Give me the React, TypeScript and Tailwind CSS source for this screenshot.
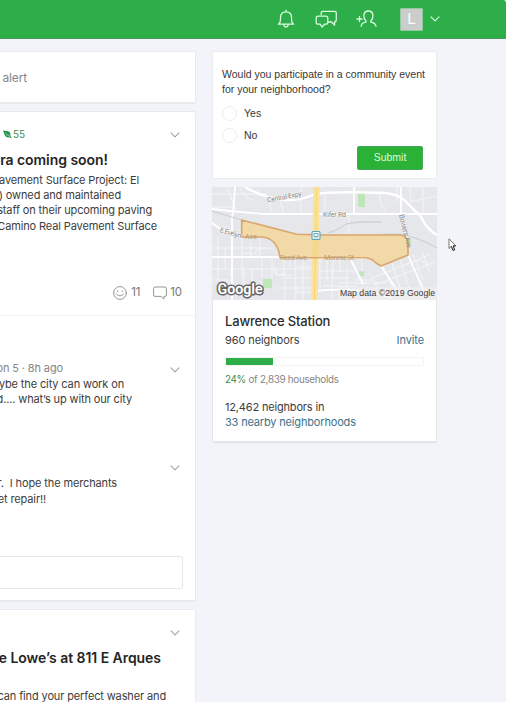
import React from "react";

type LineProps = { className: string; children: React.ReactNode };

/** One line of a post whose beginning runs off the left edge of the window. */
function Line({ className, children }: LineProps) {
  return (
    <div className={`flex justify-end overflow-hidden whitespace-pre ${className}`}>
      <span className="shrink-0">{children}</span>
    </div>
  );
}

function Chevron({ className }: { className: string }) {
  return (
    <svg className={className} width="10" height="6" viewBox="0 0 10 6" fill="none" stroke="currentColor" strokeWidth="1.1" strokeLinecap="round" strokeLinejoin="round">
      <path d="M1 0.8 L5 4.8 L9 0.8" />
    </svg>
  );
}

function Header() {
  return (
    <header className="flex h-[39px] shrink-0 items-center rounded-tr-[3px] border-b border-[#4a9a5e] bg-[#2dae49] pl-[277px] text-[#d9fbe0]">
      <svg width="18" height="20" viewBox="0 0 18 20" fill="none" stroke="currentColor" strokeWidth="1.3" strokeLinejoin="round" strokeLinecap="round">
        <path d="M1.3 15.2 C2.8 14.2 3.5 12.8 3.5 10.5 V8.2 C3.5 5 5.7 2.8 9 2.8 C12.3 2.8 14.5 5 14.5 8.2 V10.5 C14.5 12.8 15.2 14.2 16.7 15.2 Z M9 2.7 V1.2 M6.8 15.5 C7 18.8 11 18.8 11.2 15.5" />
      </svg>
      <svg className="ml-5" width="23" height="20" viewBox="0 0 23 20" fill="none" stroke="currentColor" strokeWidth="1.3" strokeLinejoin="round">
        <path d="M6.2 6 V4 Q6.2 2.4 7.8 2.4 H19.6 Q21.3 2.4 21.3 4.1 V10.7 Q21.3 12.6 19.6 13 V16 L16.5 13 H12.8" />
        <path d="M3.2 7.2 H10.8 Q12.8 7.2 12.8 9.2 V13.2 Q12.8 15.2 10.8 15.2 H9.6 L7 18 L5.2 15.2 H3.2 Q1.2 15.2 1.2 13.2 V9.2 Q1.2 7.2 3.2 7.2 Z" />
      </svg>
      <svg className="ml-[17px]" width="23" height="20" viewBox="0 0 23 20" fill="none" stroke="currentColor" strokeWidth="1.3" strokeLinejoin="round" strokeLinecap="round">
        <path d="M2 10 H7 M4.5 7.5 V12.5" />
        <path d="M6.2 17.2 C6.4 14.2 8 13.8 10.9 13 Q11.5 12.6 10.7 11.7 C9.2 10.2 8.8 8.3 8.9 6.5 C9 3.7 10.7 2 13.4 2 C16.1 2 17.8 3.7 17.9 6.5 C18 8.3 17.6 10.2 16.1 11.7 Q15.3 12.6 15.9 13 C18.8 13.8 20.8 14.2 21 17.2" />
      </svg>
      <div className="ml-[22px] flex h-[23px] w-[23px] items-center justify-center rounded-[1px] border border-[#92c99d] bg-[#cacdcb] text-[15px] text-white">L</div>
      <Chevron className="ml-[7px]" />
    </header>
  );
}

function NeighborhoodMap() {
  return (
    <svg width="225" height="113" viewBox="0 0 225 113" className="-ml-px block bg-[#e6e7ea]" fontFamily="Roboto, sans-serif">
      <g fill="#bfe6b8">
        <rect x="51" y="92" width="9" height="9" />
        <rect x="146" y="6" width="7" height="14" />
        <rect x="147" y="84" width="5" height="5" />
        <rect x="194" y="52" width="5" height="5" />
      </g>
      <g fill="none" stroke="#f5f6f7" strokeWidth="0.9">
        <path d="M0 61H61M0 82H99M6 50V92M13 62V82M30 50V91M39 56V71M48 52V71M0 93H18M19 82V90M32 80V98M50 71V91M60 72V91M72 71V90M83 71V112M91 71V113M70 91H99M64 101H99M73 93V113M40 99V82H48" />
        <path d="M42 67Q48 58 56 62M30 66H39V71M61 82Q65 91 74 86M84 80H100M64 83V88H80M78 71V82M84 97V105H99M103 84H142M108 71V104M115 71V94M121 71V91M128 71V85M135 80V105M105 91H137M111 99H145M150 71V85M143 93H160" />
        <path d="M160 91L217 68M163 98L223 75M171 79L180 100M180 76L189 103M188 73L197 101M201 67L211 93M210 65L218 86M157 85L165 101M169 5Q165 14 174 24M185 0V15M198 0L199 15M211 0V27M225 9L197 15M120 80V113M126 96H175M199 77Q209 69 220 80" />
        <path d="M0 7H54L60 24M15 0L24 24M28 0Q30 10 41 13M0 20H22M67 10L72 27M89 0V27M137 27V47M113 8V27" />
      </g>
      <g fill="none" stroke="#fff" strokeWidth="2.4" strokeLinejoin="round">
        <path d="M33 0Q52 11 73 13Q88 14 103 7Q120 4 174 6C194 8 197 21 208 28Q215 43 225 48" />
        <path d="M0 22Q25 25 52 27H225M23 0Q22 18 20 33V113M0 70H68M0 36Q14 47 30 49.5M142 0V27M189 0V25Q192 43 196 53M196 68L216 113M138 71L151 97M104 71H156M169 79L188 108M104 104Q146 99 180 111" strokeWidth="1.8" />
      </g>
      <path d="M0 24L30 33M116 46Q126 43 134 37Q149 34 169 35M169 48Q193 43 225 61" fill="none" stroke="#cfd2d1" strokeWidth="1.3" />
      <path d="M104.5 0L102.5 113" stroke="#fbe39c" strokeWidth="6.5" />
      <path d="M104.5 0L102.5 113" stroke="#f7d77c" strokeWidth="1.2" />
      <path d="M29.7 33L84.7 47.3L113 48H189Q194 49 196 54V68L169 79L164 76Q160 71 153 70.7H68L67 65Q63 51 50 50H29.7Z" fill="#f6d38b" fillOpacity="0.7" stroke="#dba56b" strokeWidth="1.6" strokeLinejoin="round" />
      <g fontSize="7" fill="#858789" stroke="#f4f4f4" strokeWidth="1.2" paintOrder="stroke">
        <text transform="translate(55.5 15.5) rotate(-11)" textLength="35">Central Expy</text>
        <text x="111" y="30" textLength="23">Kifer Rd</text>
        <text transform="translate(7.5 45) rotate(16)" textLength="22">E Evelyn</text>
      </g>
      <g fontSize="7" fill="#b79b72">
        <text x="33" y="52" textLength="12">Ave</text>
        <text x="68" y="73" textLength="27">Reed Ave</text>
        <text x="112" y="73" textLength="30">Monroe St</text>
        <text transform="translate(187 28) rotate(76)" textLength="34" fill="#858789">Bowers Ave</text>
      </g>
      <g>
        <rect x="100" y="44.5" width="8" height="8" rx="1" fill="#eef6f8" stroke="#5fa3b8" strokeWidth="1.1" />
        <rect x="102" y="46.5" width="4" height="3" fill="none" stroke="#5fa3b8" strokeWidth="0.8" />
        <path d="M102.5 51.5L103.5 50M105.5 51.5L104.5 50" stroke="#5fa3b8" strokeWidth="0.7" />
      </g>
      <text x="5.5" y="107" fontSize="14" fontWeight="600" textLength="45" lengthAdjust="spacingAndGlyphs" fill="#fff" stroke="#656565" strokeWidth="3" strokeLinejoin="round" paintOrder="stroke">Google</text>
      <rect x="126" y="100" width="99" height="13" fill="#f2f2f3" fillOpacity="0.6" />
      <text x="128" y="109" fontSize="9" fontFamily="Liberation Sans, Arial, sans-serif" textLength="95" lengthAdjust="spacingAndGlyphs" fill="#3b3b3b">Map data ©2019 Google</text>
    </svg>
  );
}

function Poll() {
  return (
    <section className="flex h-[128px] flex-col rounded-[2px] border border-[#ebecef] bg-white px-[9px] pt-[15px] font-['Liberation_Sans',Arial,sans-serif] text-[10.5px] text-[#383838]">
      <p className="whitespace-nowrap leading-[15px]">Would you participate in a community event<br />for your neighborhood?</p>
      <div className="mt-[9px] flex h-[15px] items-center gap-[7px]">
        <span className="h-[15px] w-[15px] rounded-full border border-[#ececee]" />Yes
      </div>
      <div className="mt-[7px] flex h-[15px] items-center gap-[7px]">
        <span className="h-[15px] w-[15px] rounded-full border border-[#ececee]" />No
      </div>
      <button className="mr-[4px] mt-[3px] h-[24px] w-[66px] shrink-0 self-end rounded-[2px] border border-[#43a957] bg-[#2bb135] text-[10.5px] text-[#dbfbdc]">Submit</button>
    </section>
  );
}

function NeighborhoodCard() {
  return (
    <section className="mt-2 h-[255px] rounded-b-[2px] border-x border-b border-[#e5e6ea] bg-white shadow-[0_1px_1px_#e0e1e5]">
      <NeighborhoodMap />
      <div className="px-3 text-[11px] leading-[15px] tracking-[-0.17px] text-[#3d3d3d]">
        <h2 className="mt-[13px] text-[13px] font-medium leading-4 text-[#2d2d2d]">Lawrence Station</h2>
        <div className="mt-[4px] flex justify-between tracking-[-0.1px]">
          <span>960 neighbors</span><span className="text-[#3d7289]">Invite</span>
        </div>
        <div className="mt-[9px] h-[9px] border border-[#f4f4f4]">
          <div className="h-[7px] w-[47px] bg-[#2dae49]" />
        </div>
        <p className="mt-[6px] text-[9.8px] tracking-[-0.27px] text-[#858585]"><span className="text-[#3f8a4f]">24%</span> of 2,839 households</p>
        <p className="mt-[13px]">12,462 neighbors in</p>
        <p className="text-[#3d7289]">33 nearby neighborhoods</p>
      </div>
    </section>
  );
}

function Feed() {
  return (
    <div className="flex w-[196px] shrink-0 flex-col overflow-hidden pt-[12px] text-[11px] leading-[15.2px] tracking-[-0.13px] text-[#3c3c3c]">
      <section className="h-[53px] shrink-0 rounded-r-[2px] border border-l-0 border-b-2 border-[#e8e9ed] bg-white pt-[18px] text-xs text-[#858585]">
        <Line className="w-[27px]">alert</Line>
      </section>

      <section className="mt-[7px] h-[491px] shrink-0 rounded-r-[2px] border border-b-2 border-l-0 border-[#e8e9ed] bg-white">
        <div className="mt-[15px] flex h-[15px] items-center pl-[3px] pr-[15px] text-[10px] text-[#3f8a4f]">
          <svg width="9" height="9" viewBox="0 0 9 9"><path d="M0 0.5 L6 1.5 Q8 3 7.5 6 L8.8 8.5 L7 7.5 Q2 8 1 3 Z" fill="#229044" /><path d="M2 2.5L7 7M3 5L7 5" stroke="#a8deb4" strokeWidth="0.6" /></svg>
          <span className="ml-[1px]">55</span>
          <Chevron className="ml-auto text-[#a4a4a4]" />
        </div>
        <Line className="mt-[9px] w-[108px] text-[14px] font-semibold leading-[18px] tracking-[-0.05px] text-[#252525]">Camino Real near Sierra coming soon!</Line>
        <div className="mt-[4px]">
          <Line className="w-[139px]">Pavement Surface Project: El</Line>
          <Line className="w-[121px]">(Caltrans) owned and maintained</Line>
          <Line className="w-[152px]">staff on their upcoming paving</Line>
          <Line className="w-[157px]">Camino Real Pavement Surface</Line>
        </div>
        <div className="mt-[51px] flex h-[16px] items-center justify-end pr-[13px] text-[11.5px] text-[#777]">
          <svg width="14" height="14" viewBox="0 0 14 14" fill="none" stroke="#8a8a8a" strokeWidth="0.9" strokeLinecap="round"><circle cx="7" cy="7" r="6.4" /><path d="M4.7 5V5.4M9.3 5V5.4" strokeWidth="1.2" /><path d="M3.5 8Q7 12 10.5 8" /></svg>
          <span className="ml-[4px]">11</span>
          <svg className="ml-[13px]" width="14" height="14" viewBox="0 0 14 14" fill="none" stroke="#8a8a8a" strokeWidth="0.9" strokeLinejoin="round"><path d="M2 1H12Q13.4 1 13.4 2.4V9Q13.4 10.4 12 10.4H11V13L8 10.4H2Q0.6 10.4 0.6 9V2.4Q0.6 1 2 1Z" /></svg>
          <span className="ml-[3px]">10</span>
        </div>
        <div className="mt-[14px] h-px bg-[#f1f2f4]" />
        <div className="mt-[45px] flex items-center text-[#858585]">
          <Line className="w-[63px]">Lawrence Station 5 · 8h ago</Line>
          <Chevron className="ml-auto mr-[15px] mt-[3px] text-[#a4a4a4]" />
        </div>
        <div className="mt-px">
          <Line className="w-[124px]">maybe the city can work on</Line>
          <Line className="w-[132px]">road.... what’s up with our city</Line>
        </div>
        <div className="mt-[58px] flex justify-end pr-[15px] text-[#a4a4a4]"><Chevron className="block" /></div>
        <div className="mt-[5px]">
          <Line className="w-[117px]">for.  I hope the merchants</Line>
          <Line className="w-[46px]">street repair!!</Line>
        </div>
        <div className="mr-[12px] mt-[49px] h-[33px] rounded-r-[2px] border border-l-0 border-[#e6e6e8]" />
      </section>

      <section className="mt-[7px] h-[120px] shrink-0 rounded-tr-[2px] border-r border-t border-[#ebecef] bg-white">
        <div className="mt-[20px] flex justify-end pr-[15px] text-[#a4a4a4]"><Chevron className="block" /></div>
        <Line className="mt-[13px] w-[161px] text-[14px] font-semibold leading-[18px] tracking-[-0.05px] text-[#252525]">Visit the Lowe’s at 811 E Arques</Line>
        <Line className="mt-[22px] w-[166px]">You can find your perfect washer and</Line>
      </section>
    </div>
  );
}

export default function App() {
  return (
    <div className="relative flex h-[702px] w-[506px] flex-col overflow-hidden bg-[#f3f4fa] font-[Inter,sans-serif]">
      <Header />
      <main className="flex min-h-0 flex-1 items-start overflow-hidden">
        <Feed />
        <aside className="ml-4 w-[225px] shrink-0 pt-[12px]">
          <Poll />
          <NeighborhoodCard />
        </aside>
      </main>
      <svg className="absolute left-[448px] top-[238px]" width="9" height="14" viewBox="0 0 9 14">
        <path d="M1 0.8V10.5L3.2 8.5L5 12.6L6.8 11.8L5.2 8H8Z" fill="#fff" stroke="#555" strokeWidth="0.8" />
        <path d="M3.4 8.2L5 12.4L6.6 11.6L5.1 7.8H7.4" fill="none" stroke="#222" strokeWidth="0.8" />
      </svg>
    </div>
  );
}
